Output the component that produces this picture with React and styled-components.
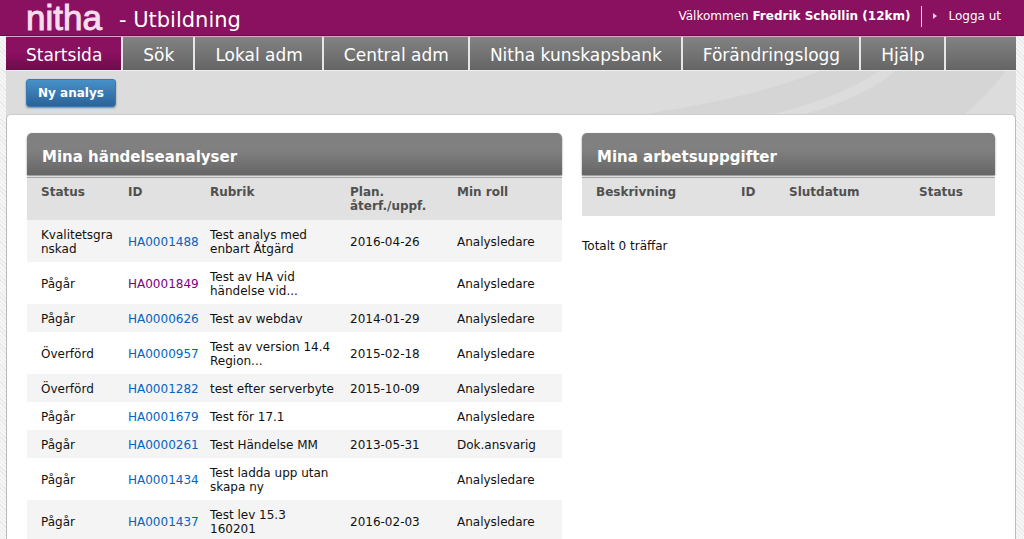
import React from "react";
import styled, { createGlobalStyle } from "styled-components";

const COLORS = {
  PLUM: "#8a1060",
  GRAY: "#dcdcdc",
  LINK: "#0563c1",
  VISITED: "#800080",
};

const GlobalStyle = createGlobalStyle`
  * {
    box-sizing: border-box;
  }
  body {
    margin: 0;
    background: repeating-linear-gradient(45deg, #f6f6f6 0 2px, #e9e9e9 2px 3px);
    font-family: Verdana, "DejaVu Sans", sans-serif;
    font-size: 12px;
    line-height: 14px;
    color: #111;
  }
`;

const Header = styled.header`
  display: flex;
  justify-content: space-between;
  height: 36px;
  padding: 0 23px 0 26px;
  background: ${COLORS.PLUM};
  border-bottom: 1px solid #6d0a4a;
  color: #fff;
`;

const Brand = styled.div`
  display: flex;
  align-items: flex-start;
  gap: 17px;
`;

const Logo = styled.span`
  font-family: "Liberation Sans", Arial, sans-serif;
  font-size: 35px;
  line-height: 36px;
  color: #f6dcec;
  -webkit-text-stroke: 1px #f6dcec;
`;

const Environment = styled.span`
  font-size: 21px;
  line-height: 40px;
`;

const UserBar = styled.div`
  display: flex;
  align-items: center;
  height: 32px;
`;

const Logout = styled.a`
  display: flex;
  align-items: center;
  gap: 11px;
  height: 21px;
  margin-left: 11px;
  padding-left: 11px;
  border-left: 1px solid #f0cfe2;
  color: #fff;
  text-decoration: none;
`;

const Page = styled.div`
  margin: 0 8px 0 6px;
  min-height: calc(100vh - 36px);
  display: flex;
  flex-direction: column;
`;

const Nav = styled.nav`
  display: flex;
  height: 35px;
  border-top: 1px solid #dba9c6;
  border-bottom: 1px solid #eee;
  background: linear-gradient(#828282, #656565);
`;

const NavLink = styled.a`
  padding: 0 19px 0 20px;
  border-right: 2px solid #e6e6e6;
  background: ${(props) => (props.$active ? `linear-gradient(${COLORS.PLUM} 50%, #6b0d4b)` : "none")};
  font-size: 17px;
  line-height: 36px;
  color: #fff;
  text-decoration: none;
  white-space: nowrap;
`;

const Toolbar = styled.div`
  position: relative;
  display: flex;
  height: 47px;
  padding: 8px 20px;
  background: ${COLORS.GRAY};
`;

const Swoosh = styled.svg`
  position: absolute;
  top: 0;
  right: 0;
`;

const Button = styled.button`
  height: 28px;
  padding: 0 11px;
  border: 1px solid #3a78ae;
  border-radius: 3px;
  background: linear-gradient(#4790c8, #2a6399);
  box-shadow: 0 1px 2px rgba(0, 0, 0, 0.4);
  font: bold 12px Verdana, "DejaVu Sans", sans-serif;
  color: #fff;
`;

const Content = styled.main`
  position: relative;
  flex: 1;
  display: flex;
  align-items: flex-start;
  gap: 20px;
  margin-top: -4px;
  padding: 18px 20px 0;
  border: 1px solid #bbb;
  border-top-color: #ccc;
  border-bottom: 0;
  border-radius: 5px 5px 0 0;
  background: #fff;
`;

const Panel = styled.section`
  flex: ${(props) => props.$grow} 1 0;
  min-width: 0;
`;

const PanelTitle = styled.h2`
  position: relative;
  margin: 0;
  padding: 15px 15px 8px;
  border-radius: 5px 5px 0 0;
  background: linear-gradient(#808080 40%, #666);
  box-shadow: 0 1px 2px rgba(0, 0, 0, 0.5);
  font-size: 15px;
  line-height: 19px;
  color: #fff;
`;

const Table = styled.table`
  width: 100%;
  margin-top: 2px;
  border-top: 1px solid #aaa;
  border-collapse: separate;
  border-spacing: 0;
  table-layout: fixed;
`;

const HeadCell = styled.th`
  width: ${(props) => props.$width};
  padding: 7px 0 ${(props) => (props.$short ? "17px" : "7px")} 14px;
  background: #e1e1e1;
  color: #505050;
  text-align: left;
  vertical-align: top;
`;

const Row = styled.tr`
  &:nth-child(odd) {
    background: #f4f4f4;
  }
`;

const Cell = styled.td`
  padding: 8px 0 6px 14px;
  overflow-wrap: ${(props) => (props.$nowrap ? "normal" : "anywhere")};
  white-space: ${(props) => (props.$nowrap ? "nowrap" : "pre-line")};
`;

const CaseLink = styled.a`
  color: ${(props) => (props.$visited ? COLORS.VISITED : COLORS.LINK)};
  text-decoration: none;
`;

const Total = styled.p`
  margin: 23px 0 0;
`;

const menu = ["Startsida", "Sök", "Lokal adm", "Central adm", "Nitha kunskapsbank", "Förändringslogg", "Hjälp"];

const cases = [
  { status: "Kvalitetsgranskad", id: "HA0001488", title: "Test analys med enbart Åtgärd", date: "2016-04-26", role: "Analysledare" },
  { status: "Pågår", id: "HA0001849", title: "Test av HA vid händelse vid...", date: "", role: "Analysledare", visited: true },
  { status: "Pågår", id: "HA0000626", title: "Test av webdav", date: "2014-01-29", role: "Analysledare" },
  { status: "Överförd", id: "HA0000957", title: "Test av version 14.4 Region...", date: "2015-02-18", role: "Analysledare" },
  { status: "Överförd", id: "HA0001282", title: "test efter serverbyte", date: "2015-10-09", role: "Analysledare" },
  { status: "Pågår", id: "HA0001679", title: "Test för 17.1", date: "", role: "Analysledare" },
  { status: "Pågår", id: "HA0000261", title: "Test Händelse MM", date: "2013-05-31", role: "Dok.ansvarig" },
  { status: "Pågår", id: "HA0001434", title: "Test ladda upp utan skapa ny", date: "", role: "Analysledare" },
  { status: "Pågår", id: "HA0001437", title: "Test lev 15.3\n160201", date: "2016-02-03", role: "Analysledare" },
];

const App = () => {
  return (
    <>
      <GlobalStyle />
      <Header>
        <Brand>
          <Logo>nitha</Logo>
          <Environment>- Utbildning</Environment>
        </Brand>
        <UserBar>
          <span>
            Välkommen <b>Fredrik Schöllin (12km)</b>
          </span>
          <Logout href="#">
            <svg width="4" height="6" viewBox="0 0 4 6" aria-hidden="true">
              <path d="M0 0L4 3L0 6Z" fill="#f3cfe4" />
            </svg>
            Logga ut
          </Logout>
        </UserBar>
      </Header>
      <Page>
        <Nav>
          {menu.map((item, index) => (
            <NavLink key={item} href="#" $active={index === 0}>
              {item}
            </NavLink>
          ))}
        </Nav>
        <Toolbar>
          <Swoosh width="400" height="47" viewBox="0 0 400 47" aria-hidden="true">
            <path d="M0 47Q130 30 204 0H264Q210 34 136 47Z" fill="#d5d5d5" />
            <path d="M172 47Q240 32 280 0H390Q370 26 344 47Z" fill="#d5d5d5" />
          </Swoosh>
          <Button type="button">Ny analys</Button>
        </Toolbar>
        <Content>
          <Panel $grow={535}>
            <PanelTitle>Mina händelseanalyser</PanelTitle>
            <Table>
              <thead>
                <tr>
                  <HeadCell $width="87px">Status</HeadCell>
                  <HeadCell $width="82px">ID</HeadCell>
                  <HeadCell $width="140px">Rubrik</HeadCell>
                  <HeadCell $width="107px">Plan. återf./uppf.</HeadCell>
                  <HeadCell>Min roll</HeadCell>
                </tr>
              </thead>
              <tbody>
                {cases.map((item) => (
                  <Row key={item.id}>
                    <Cell>{item.status}</Cell>
                    <Cell $nowrap>
                      <CaseLink href="#" $visited={item.visited}>
                        {item.id}
                      </CaseLink>
                    </Cell>
                    <Cell>{item.title}</Cell>
                    <Cell $nowrap>{item.date}</Cell>
                    <Cell>{item.role}</Cell>
                  </Row>
                ))}
              </tbody>
            </Table>
          </Panel>
          <Panel $grow={413}>
            <PanelTitle>Mina arbetsuppgifter</PanelTitle>
            <Table>
              <thead>
                <tr>
                  <HeadCell $short $width="145px">Beskrivning</HeadCell>
                  <HeadCell $short $width="48px">ID</HeadCell>
                  <HeadCell $short $width="130px">Slutdatum</HeadCell>
                  <HeadCell $short>Status</HeadCell>
                </tr>
              </thead>
            </Table>
            <Total>Totalt 0 träffar</Total>
          </Panel>
        </Content>
      </Page>
    </>
  );
};

export default App;
